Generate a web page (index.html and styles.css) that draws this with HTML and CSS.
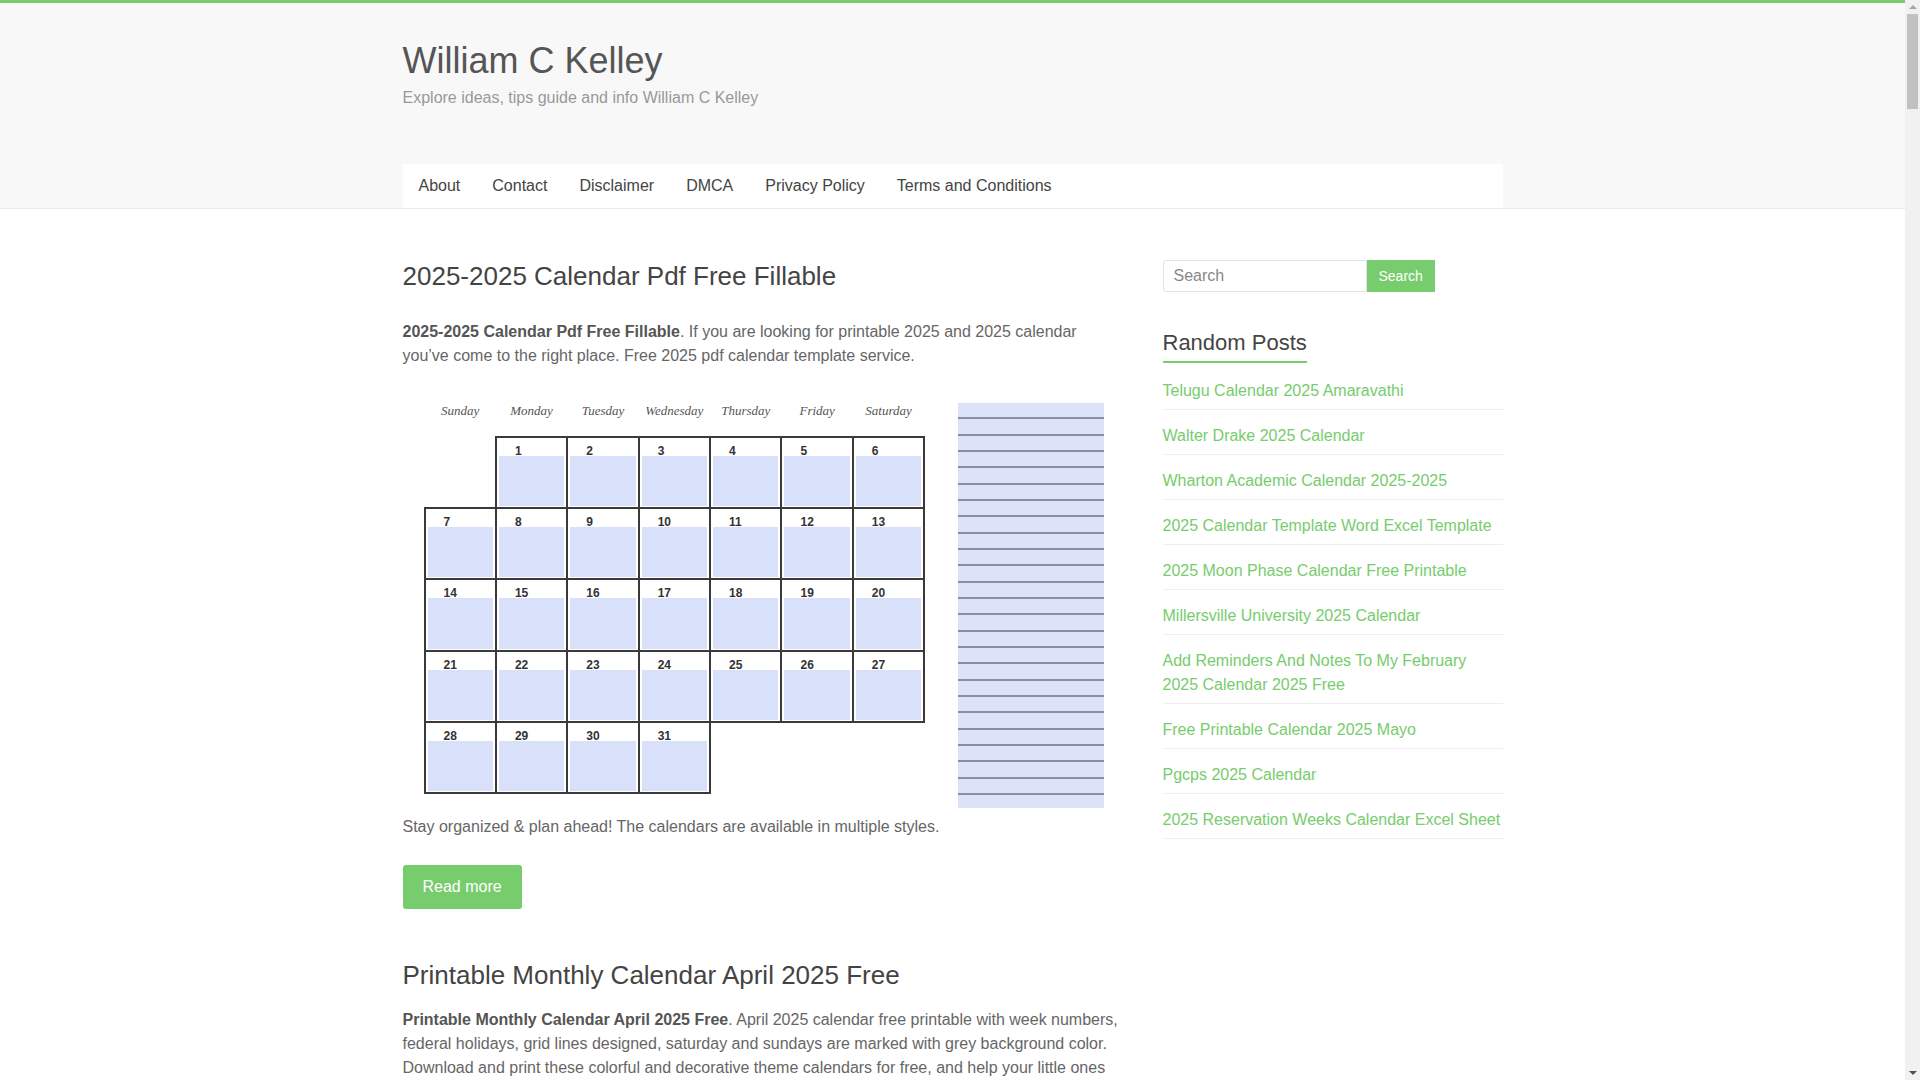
FILE: index.html
```html
<!DOCTYPE html>
<html lang="en">
<head>
  <meta charset="UTF-8">
  <meta name="viewport" content="width=device-width, initial-scale=1.0">
  <title>William C Kelley</title>
  <link rel="stylesheet" href="styles.css">
</head>
<body>
<header class="site-header">
  <div class="inner">
    <h1 class="site-title"><a href="#">William C Kelley</a></h1>
    <p class="site-description">Explore ideas, tips guide and info William C Kelley</p>
    <nav class="main-nav">
      <a href="#">About</a>
      <a href="#">Contact</a>
      <a href="#">Disclaimer</a>
      <a href="#">DMCA</a>
      <a href="#">Privacy Policy</a>
      <a href="#">Terms and Conditions</a>
    </nav>
  </div>
</header>

<div class="inner site-main">
  <main class="primary">
    <article class="post">
      <h2 class="entry-title"><a href="#">2025-2025 Calendar Pdf Free Fillable</a></h2>
      <div class="entry-content">
        <p><strong>2025-2025 Calendar Pdf Free Fillable</strong>. If you are looking for printable 2025 and 2025 calendar you’ve come to the right place. Free 2025 pdf calendar template service.</p>
        <!-- calendar template picture -->
        <div class="cal">
          <div class="cal-grid">
            <div class="day">Sunday</div><div class="day">Monday</div><div class="day">Tuesday</div><div class="day">Wednesday</div><div class="day">Thursday</div><div class="day">Friday</div><div class="day">Saturday</div>
            <div class="blank"></div><div class="cell">1</div><div class="cell">2</div><div class="cell">3</div><div class="cell">4</div><div class="cell">5</div><div class="cell">6</div>
            <div class="cell">7</div><div class="cell">8</div><div class="cell">9</div><div class="cell">10</div><div class="cell">11</div><div class="cell">12</div><div class="cell">13</div>
            <div class="cell">14</div><div class="cell">15</div><div class="cell">16</div><div class="cell">17</div><div class="cell">18</div><div class="cell">19</div><div class="cell">20</div>
            <div class="cell">21</div><div class="cell">22</div><div class="cell">23</div><div class="cell">24</div><div class="cell">25</div><div class="cell">26</div><div class="cell">27</div>
            <div class="cell">28</div><div class="cell">29</div><div class="cell">30</div><div class="cell">31</div>
          </div>
          <div class="cal-notes"></div>
        </div>
        <p class="after-pic">Stay organized &amp; plan ahead! The calendars are available in multiple styles.</p>
      </div>
      <a class="read-more" href="#">Read more</a>
    </article>

    <article class="post">
      <h2 class="entry-title"><a href="#">Printable Monthly Calendar April 2025 Free</a></h2>
      <div class="entry-content">
        <p><strong>Printable Monthly Calendar April 2025 Free</strong>. April 2025 calendar free printable with week numbers, federal holidays, grid lines designed, saturday and sundays are marked with grey background color. Download and print these colorful and decorative theme calendars for free, and help your little ones learn the days of the week and the months of the year.</p>
      </div>
      <a class="read-more" href="#">Read more</a>
    </article>
  </main>

  <aside class="sidebar">
    <form class="search-form">
      <input type="text" placeholder="Search">
      <button type="button">Search</button>
    </form>
    <section class="widget">
      <h3 class="widget-title">Random Posts</h3>
      <ul>
        <li><a href="#">Telugu Calendar 2025 Amaravathi</a></li>
        <li><a href="#">Walter Drake 2025 Calendar</a></li>
        <li><a href="#">Wharton Academic Calendar 2025-2025</a></li>
        <li><a href="#">2025 Calendar Template Word Excel Template</a></li>
        <li><a href="#">2025 Moon Phase Calendar Free Printable</a></li>
        <li><a href="#">Millersville University 2025 Calendar</a></li>
        <li><a href="#">Add Reminders And Notes To My February 2025 Calendar 2025 Free</a></li>
        <li><a href="#">Free Printable Calendar 2025 Mayo</a></li>
        <li><a href="#">Pgcps 2025 Calendar</a></li>
        <li><a href="#">2025 Reservation Weeks Calendar Excel Sheet</a></li>
      </ul>
    </section>
  </aside>
</div>

<!-- window scrollbar -->
<div class="scrollbar" aria-hidden="true">
  <span class="arrow up"></span>
  <span class="thumb"></span>
  <span class="arrow down"></span>
</div>
</body>
</html>
```

FILE: styles.css
```css
body {
  margin: 0 15px 0 0;
  font-family: "Liberation Sans", Arial, sans-serif;
  font-size: 16px;
  line-height: 24px;
  color: #666;
  background: #fff;
}
a {
  text-decoration: none;
}
.inner {
  max-width: 1100px;
  margin: 0 auto;
}

/* header */
.site-header {
  background: #f8f8f8;
  border-top: 3px solid #77cc6d;
  border-bottom: 1px solid #eaeaea;
}
.site-header .inner {
  padding-top: 36px;
}
.site-title {
  margin: 0;
  font-size: 36px;
  line-height: 43px;
  font-weight: normal;
}
.site-title a {
  color: #555;
}
.site-description {
  margin: 4px 0 0;
  color: #999;
}
.main-nav {
  display: flex;
  margin-top: 54px;
  background: #fff;
}
.main-nav a {
  padding: 0 16px;
  line-height: 44px;
  color: #444;
}

/* content */
.site-main {
  display: flex;
  justify-content: space-between;
}
.primary {
  width: 716px;
  padding-top: 50px;
}
.entry-title {
  margin: 0 0 16px;
  font-size: 26px;
  line-height: 34px;
  font-weight: normal;
}
.post:first-child .entry-title {
  margin-bottom: 27px;
}
.entry-title a {
  color: #444;
}
.entry-content p {
  margin: 0 0 34px;
}
.entry-content strong {
  color: #555;
}
.entry-content .after-pic {
  margin: 7px 0 26px;
}
.read-more {
  display: inline-block;
  padding: 10px 20px;
  background: #77cc6d;
  color: #fff;
  border-radius: 3px;
}
.post {
  margin-bottom: 49px;
}

/* calendar picture */
.cal {
  display: flex;
  height: 406px;
  background: #fff;
}
.cal-grid {
  display: grid;
  grid-template-columns: repeat(7, 71.4px);
  grid-template-rows: 35px repeat(5, 71.2px);
  margin-left: 22px;
  width: 500px;
}
.day {
  font-family: "Liberation Serif", serif;
  font-style: italic;
  font-size: 13px;
  line-height: 18px;
  color: #555;
  text-align: center;
}
.cell {
  outline: 2px solid #3a3a3a;
  outline-offset: -1px;
  padding: 7px 0 0 19px;
  font-size: 12px;
  line-height: 14px;
  font-weight: bold;
  color: #333;
  background: linear-gradient(#d9e0fa, #d9e0fa) no-repeat 3px 19px / calc(100% - 6px) calc(100% - 21px);
}
.cal-notes {
  margin-left: 33px;
  width: 146px;
  margin-top: 1px;
  background: repeating-linear-gradient(#dce3f9 0, #dce3f9 14.4px, #868ea9 14.4px, #868ea9 16.33px);
}

/* sidebar */
.sidebar {
  width: 340px;
  padding-top: 51px;
}
.search-form {
  display: flex;
  margin-bottom: 38px;
}
.search-form input {
  width: 204px;
  box-sizing: border-box;
  height: 32px;
  padding: 0 10px;
  border: 1px solid #e4e4e4;
  border-radius: 3px 0 0 3px;
  font-family: inherit;
  font-size: 16px;
  color: #666;
}
.search-form input::placeholder {
  color: #888;
}
.search-form button {
  height: 32px;
  padding: 0 12px;
  border: none;
  background: #77cc6d;
  color: #fff;
  font-family: inherit;
  font-size: 14px;
}
.widget-title {
  display: inline-block;
  margin: 0 0 2px;
  padding-bottom: 5px;
  border-bottom: 2px solid #77cc6d;
  font-size: 22px;
  line-height: 26px;
  font-weight: normal;
  color: #444;
}
.widget ul {
  margin: 0;
  padding: 0;
  list-style: none;
}
.widget li {
  padding: 14px 0 6px;
  border-bottom: 1px solid #eee;
}
.widget li a {
  color: #77cc6d;
}

/* scrollbar strip */
.scrollbar {
  position: fixed;
  top: 0;
  right: 0;
  width: 15px;
  height: 100vh;
  background: #f1f1f1;
  display: flex;
  flex-direction: column;
  align-items: center;
}
.scrollbar .thumb {
  width: 11px;
  height: 95px;
  background: #c1c1c1;
}
.scrollbar .arrow {
  width: 0;
  height: 0;
  margin: 5px 0;
  border-left: 4px solid transparent;
  border-right: 4px solid transparent;
}
.scrollbar .up {
  border-bottom: 4px solid #a3a3a3;
}
.scrollbar .down {
  margin-top: auto;
  border-top: 4px solid #505050;
}
```
